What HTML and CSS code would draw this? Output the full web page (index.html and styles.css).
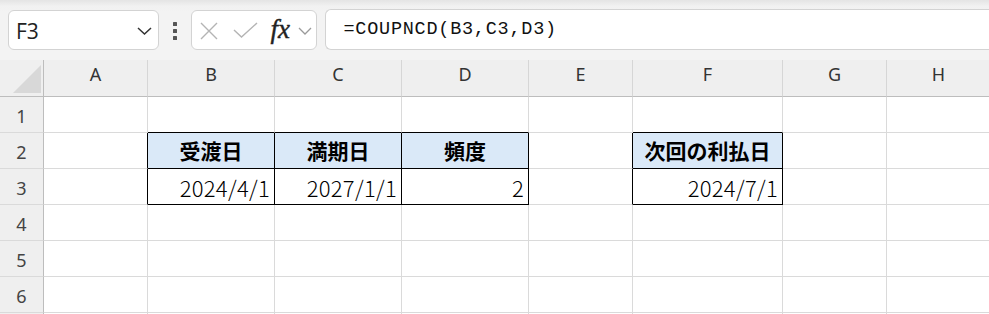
FILE: index.html
```html
<!DOCTYPE html>
<html lang="ja">
<head>
<meta charset="utf-8">
<title>COUPNCD</title>
<link rel="stylesheet" href="styles.css">
</head>
<body>
<div class="app">
  <div class="toolbar">
    <div class="namebox">
      <span class="ref">F3</span>
      <svg class="chev" width="15" height="8" viewBox="0 0 15 8"><path d="M1 1 L7.5 7 L14 1" fill="none" stroke="#333" stroke-width="1.5"/></svg>
    </div>
    <div class="dots"><i></i><i></i><i></i></div>
    <div class="fxbox">
      <svg class="ico-x" width="18" height="18" viewBox="0 0 18 18"><path d="M1 1 L17 17 M17 1 L1 17" fill="none" stroke="#b4b4b4" stroke-width="1.4"/></svg>
      <svg class="ico-check" width="25" height="16" viewBox="0 0 25 16"><path d="M1 8 L8.5 15 L24 1" fill="none" stroke="#b4b4b4" stroke-width="1.4"/></svg>
      <span class="fx">fx</span>
      <svg class="chev-s" width="14" height="8" viewBox="0 0 14 8"><path d="M1 1 L7 7 L13 1" fill="none" stroke="#9a9a9a" stroke-width="1.3"/></svg>
    </div>
    <div class="formula">=COUPNCD(B3,C3,D3)</div>
  </div>
  <div class="sheet">
    <div class="corner"><div class="tri"></div></div>
    <div class="ch">A</div><div class="ch">B</div><div class="ch">C</div><div class="ch">D</div><div class="ch">E</div><div class="ch">F</div><div class="ch">G</div><div class="ch">H</div>

    <div class="rh">1</div>
    <div class="c"></div><div class="c bb"></div><div class="c bb"></div><div class="c bb"></div><div class="c"></div><div class="c bb"></div><div class="c"></div><div class="c"></div>

    <div class="rh">2</div>
    <div class="c br"></div>
    <div class="c t hd">受渡日</div>
    <div class="c t hd">満期日</div>
    <div class="c t hd">頻度</div>
    <div class="c br"></div>
    <div class="c t hd">次回の利払日</div>
    <div class="c"></div><div class="c"></div>

    <div class="rh">3</div>
    <div class="c br"></div>
    <div class="c t num">2024/4/1</div>
    <div class="c t num">2027/1/1</div>
    <div class="c t num">2</div>
    <div class="c br"></div>
    <div class="c t num">2024/7/1</div>
    <div class="c"></div><div class="c"></div>

    <div class="rh">4</div>
    <div class="c"></div><div class="c"></div><div class="c"></div><div class="c"></div><div class="c"></div><div class="c"></div><div class="c"></div><div class="c"></div>
    <div class="rh">5</div>
    <div class="c"></div><div class="c"></div><div class="c"></div><div class="c"></div><div class="c"></div><div class="c"></div><div class="c"></div><div class="c"></div>
    <div class="rh">6</div>
    <div class="c"></div><div class="c"></div><div class="c"></div><div class="c"></div><div class="c"></div><div class="c"></div><div class="c"></div><div class="c"></div>
    <div class="rh"></div>
    <div class="c"></div><div class="c"></div><div class="c"></div><div class="c"></div><div class="c"></div><div class="c"></div><div class="c"></div><div class="c"></div>
  </div>
</div>
</body>
</html>
```

FILE: styles.css
```css
* { box-sizing: border-box; }
html, body { margin: 0; padding: 0; }
body {
  width: 989px;
  height: 314px;
  overflow: hidden;
  background: #fff;
  font-family: "Noto Sans", "Open Sans", sans-serif;
}
.app { width: 989px; height: 314px; overflow: hidden; }

.toolbar {
  height: 60px;
  display: flex;
  align-items: flex-start;
  padding: 10px 0 0 8px;
  background: linear-gradient(#e4e4e4 0px, #f1f1f1 6px, #f3f3f3 12px);
}
.namebox {
  width: 151px;
  height: 40px;
  flex: none;
  background: #fff;
  border: 1px solid #d3d3d3;
  border-radius: 6px;
  display: flex;
  align-items: center;
  justify-content: space-between;
  padding: 0 6px 0 7px;
}
.ref {
  font-family: "Open Sans", "Noto Sans", sans-serif;
  font-size: 21px;
  color: #222;
  line-height: 1;
  margin-top: 3px;
}
.chev { display: block; margin-top: 2px; }

.dots {
  width: 4px;
  margin: 12px 0 0 14px;
  display: flex;
  flex-direction: column;
  gap: 3.5px;
  flex: none;
}
.dots i {
  display: block;
  width: 3.5px;
  height: 3.5px;
  background: #555;
  border-radius: 0.5px;
}

.fxbox {
  width: 126px;
  height: 40px;
  margin-left: 13.5px;
  flex: none;
  background: #fff;
  border: 1px solid #d3d3d3;
  border-radius: 6px;
  display: flex;
  align-items: center;
  padding-left: 8px;
}
.ico-x { display: block; margin-top: 1px; }
.ico-check { display: block; margin-left: 15px; }
.fx {
  font-family: "Liberation Serif", "DejaVu Serif", serif;
  font-style: italic;
  font-weight: normal;
  font-size: 27px;
  color: #222;
  margin-left: 13px;
  line-height: 1;
  margin-top: -1px;
  -webkit-text-stroke: 0.4px #222;
}
.chev-s { display: block; margin-left: 8px; margin-top: 1px; }

.formula {
  flex: 1;
  height: 41px;
  margin: -1px 0 0 8px;
  background: #fff;
  border: 1px solid #d3d3d3;
  border-right: none;
  border-radius: 6px 0 0 6px;
  display: flex;
  align-items: center;
  padding-left: 18px;
  font-family: "Liberation Mono", "DejaVu Sans Mono", monospace;
  font-size: 18.5px;
  letter-spacing: 0.75px;
  color: #111;
  white-space: nowrap;
}

.sheet {
  display: grid;
  grid-template-columns: 44px 104px 127px 127px 127px 104px 150px 104px 104px;
  grid-template-rows: 37px repeat(7, 36px);
  width: 991px;
}
.corner {
  background: #efefef;
  border-right: 1px solid #bdbdbd;
  border-bottom: 1px solid #bdbdbd;
  display: flex;
  align-items: flex-end;
  justify-content: flex-end;
  padding: 0 2px 3px 0;
}
.tri {
  width: 28px;
  height: 28px;
  background: #d8d8d8;
  clip-path: polygon(100% 0, 100% 100%, 0 100%);
}
.ch {
  background: #efefef;
  border-right: 1px solid #d6d6d6;
  border-bottom: 1px solid #bdbdbd;
  display: flex;
  align-items: center;
  justify-content: center;
  padding-bottom: 9px;
  padding-top: 0;
  font-size: 18px;
  color: #333;
  line-height: 1;
}
.rh {
  background: #efefef;
  border-right: 1px solid #bdbdbd;
  border-bottom: 1px solid #dadada;
  display: flex;
  align-items: center;
  justify-content: center;
  font-size: 18px;
  color: #444;
  line-height: 1;
  padding-top: 2px;
}
.c {
  background: #fff;
  border-right: 1px solid #dadada;
  border-bottom: 1px solid #dadada;
  font-family: "Noto Sans CJK JP", "Noto Sans", sans-serif;
  color: #000;
  display: flex;
  align-items: center;
  white-space: nowrap;
  line-height: 1;
}
.c.bb { border-bottom-color: #000; }
.c.br { border-right-color: #000; }
.c.t { border-right-color: #000; border-bottom-color: #000; }
.hd {
  background: #dae9f8;
  justify-content: center;
  font-weight: bold;
  font-size: 21px;
}
.num {
  justify-content: flex-end;
  padding-right: 4px;
  font-size: 22px;
  font-weight: 300;
  letter-spacing: 0.3px;
  padding-top: 0;
}
```
